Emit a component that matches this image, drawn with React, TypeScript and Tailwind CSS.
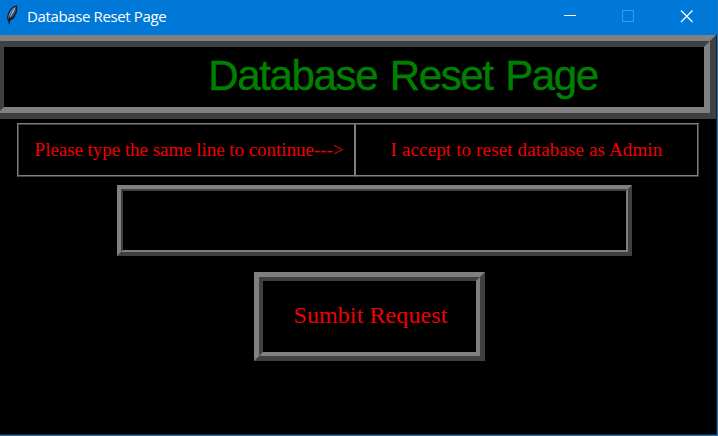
import type { ReactNode } from 'react';

function Ridge({ outer, inner, className, children }: { outer: string; inner: string; className: string; children?: ReactNode }) {
  return (
    <div className={`${outer} border-t-[#808080] border-l-[#808080] border-r-[#404040] border-b-[#404040] ${className}`}>
      <div className={`${inner} flex h-full w-full items-center justify-center border-t-[#404040] border-l-[#404040] border-r-[#808080] border-b-[#808080] bg-black`}>
        {children}
      </div>
    </div>
  );
}

function Feather() {
  return (
    <svg width="12" height="21" viewBox="0 0 12 21" className="block">
      <path d="M10.900.4C7.600.500 3.600 3.600 2.200 7.800 1 10.800.7 13.400 1.800 15.200L3.300 20.200l1-4.700c2.400-.5 4.300-2.500 5.200-5l-.5-.2 1.300-1.300C11.200 6.500 11.800 2.600 10.900.4Z" fill="#141c28" />
      <path d="M9.200 1.700C6.600 2.700 4.200 5.600 3.200 8.600c-.8 2.200-1 3.900-.7 5.100C4.300 9.300 6.700 5 9.200 1.700Z" fill="#4f86bd" />
      <path d="M9.900 1.700C7.400 4 5 8.400 3.600 13.200 5.800 10.500 8.500 5.800 9.900 1.700Z" fill="#b4cfeb" />
      <path d="M10.200 3.200C10 6.700 7.900 10.900 5 13.300 6.500 10.200 8.500 6.600 10.200 3.200Z" fill="#41658c" />
    </svg>
  );
}

export default function App() {
  return (
    <div className="flex h-[436px] w-[718px] flex-col overflow-hidden border-r border-b border-[#1878c8] bg-black">
      <header className="flex h-[35px] shrink-0 items-center bg-[#0078d7] text-white">
        <div className="ml-[6px] w-[21px] pb-[5px]"><Feather /></div>
        <span className="whitespace-nowrap pb-[3px] font-['Open_Sans',sans-serif] text-[15px] tracking-[-0.37px]">Database Reset Page</span>
        <svg width="132" height="14" viewBox="0 0 132 14" fill="none" className="mr-[23px] mb-[4px] ml-auto" shapeRendering="crispEdges">
          <path d="M2 6.500h12" stroke="#fff" />
          <path d="M60.500 1.500h11v11h-11z" stroke="#3c9be6" />
          <path d="m119 1.500 11.500 11.500m0-11.500-11.500 11.500" stroke="#fff" strokeWidth="1.200" shapeRendering="auto" />
        </svg>
      </header>
      <main className="flex grow flex-col border-r border-b border-[#202020]">
        <Ridge outer="border-[6px]" inner="border-[6px]" className="ml-[-8px] h-[83.5px] w-[724px] shrink-0">
          <h1 className="ml-[98px] whitespace-nowrap pb-[2px] font-['Liberation_Sans',Arial,sans-serif] text-[42px] leading-none tracking-[-1.350px] [word-spacing:2.200px] [-webkit-text-stroke:0.4px_#008000] text-[#008000]">Database Reset Page</h1>
        </Ridge>
        <div className="mt-1 ml-[17px] flex h-[54.500px] shrink-0 font-['Liberation_Serif',serif] text-[19px] text-[#f00000]">
          <Ridge outer="border-y border-l" inner="border" className="w-[338px]">
            <span className="ml-[5px] whitespace-nowrap tracking-[-0.04px]">Please type the same line to continue---&gt;</span>
          </Ridge>
          <Ridge outer="border" inner="border-y border-r" className="w-[344px]">
            <span className="whitespace-nowrap tracking-[0.140px]">I accept to reset database as Admin</span>
          </Ridge>
        </div>
        <Ridge outer="border-[4px]" inner="border-[2px]" className="mt-2 ml-[117px] h-[71px] w-[515px] shrink-0">
          <input aria-label="Confirmation" className="h-full w-full bg-black px-2 text-[#f00000] outline-none" />
        </Ridge>
        <Ridge outer="border-[5px]" inner="border-[4px]" className="mt-4 ml-[254px] h-[89px] w-[231px] shrink-0">
          <button className="ml-[2px] whitespace-nowrap pb-[3px] font-['Liberation_Serif',serif] text-[24px] tracking-[0.1px] text-[#f00000]">Sumbit Request</button>
        </Ridge>
      </main>
    </div>
  );
}
